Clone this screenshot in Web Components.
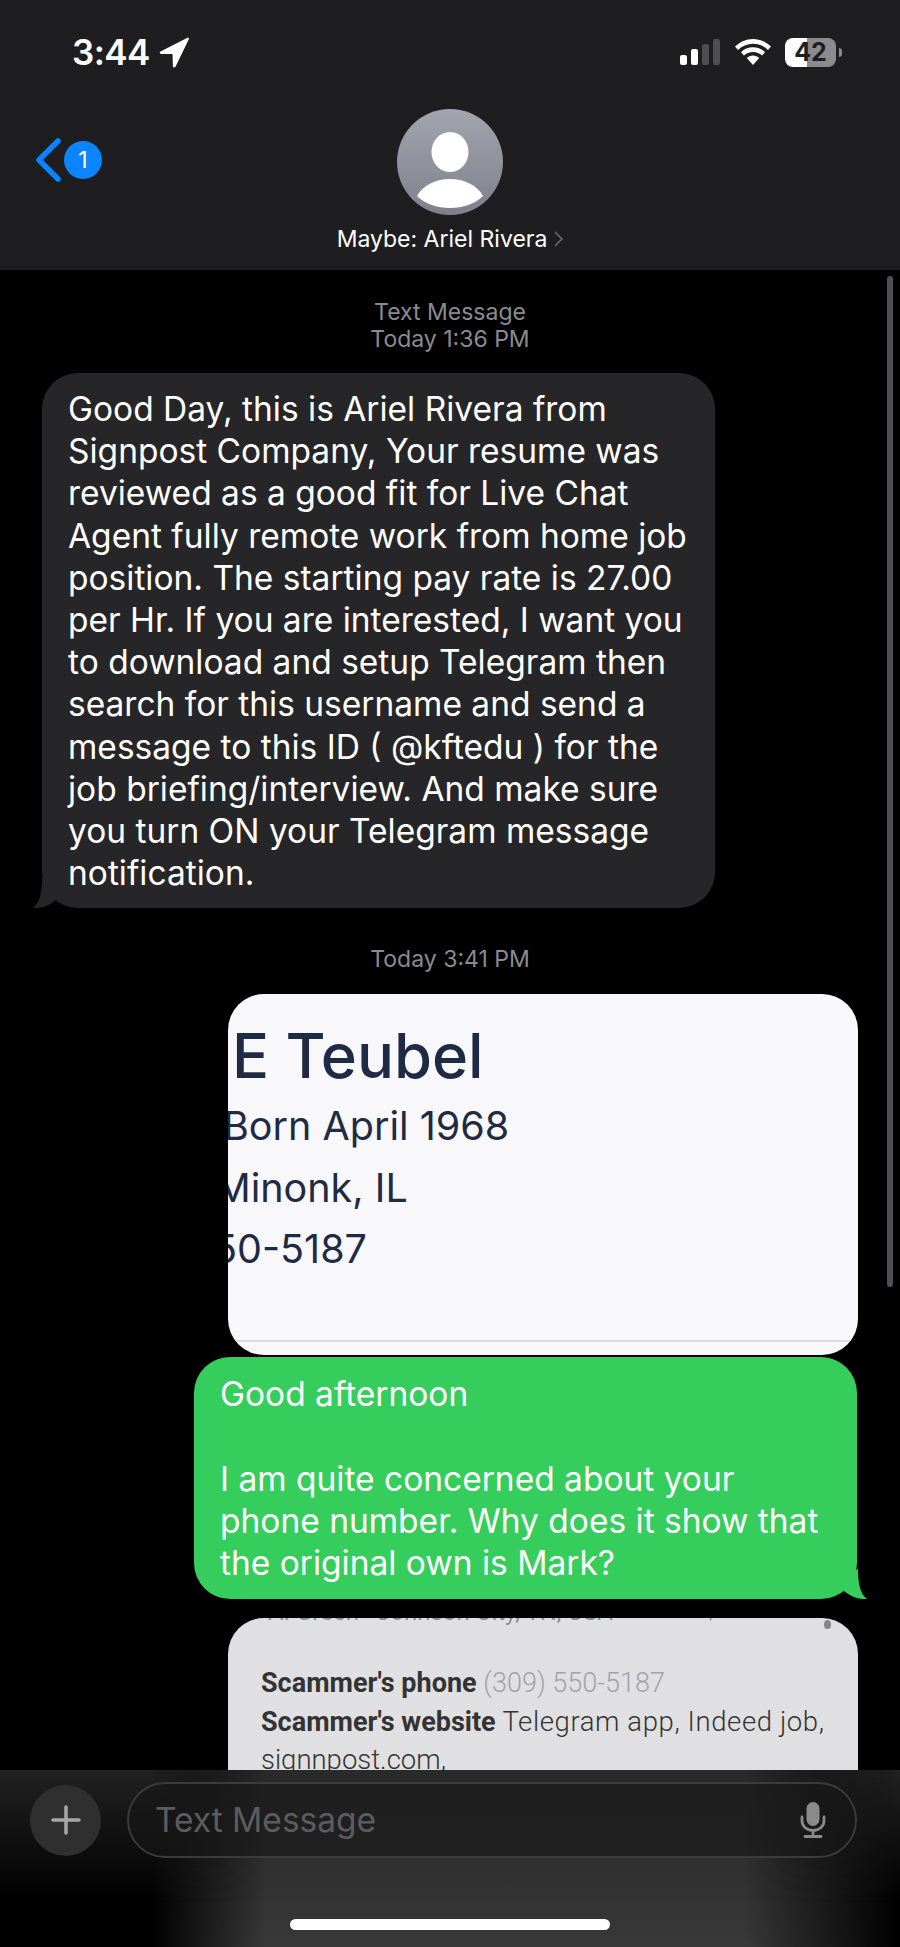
<!DOCTYPE html>
<html lang="en">
<head>
<meta charset="utf-8">
<title>Messages</title>
<style>
  html, body { margin: 0; background: #000; }
  body { font-family: Inter, "Liberation Sans", sans-serif; }
</style>
</head>
<body>
<sms-screen>
  <sms-header slot="top" name="Maybe: Ariel Rivera" time="3:44" battery="42" unread="1"></sms-header>

  <sms-stamp>Text Message<br>Today 1:36 PM</sms-stamp>
  <sms-bubble kind="in" style="margin-top:20px">Good Day, this is Ariel Rivera from<br>Signpost Company, Your resume was<br>reviewed as a good fit for Live Chat<br>Agent fully remote work from home job<br>position. The starting pay rate is 27.00<br>per Hr. If you are interested, I want you<br>to download and setup Telegram then<br>search for this username and send a<br>message to this ID ( @kftedu ) for the<br>job briefing/interview. And make sure<br>you turn ON your Telegram message<br>notification.</sms-bubble>

  <sms-stamp style="margin-top:38px">Today 3:41 PM</sms-stamp>
  <profile-shot style="margin-top:21px"></profile-shot>

  <sms-bubble kind="out" style="margin-top:2px">Good afternoon<br><br>I am quite concerned about your<br>phone number. Why does it show that<br>the original own is Mark?</sms-bubble>

  <report-shot style="margin-top:19px"></report-shot>

  <sms-composer slot="bottom"></sms-composer>
</sms-screen>

<script>
  class SmsScreen extends HTMLElement {
    constructor() {
      super();
      const shadowRoot = this.attachShadow({ mode: "open" });
      shadowRoot.innerHTML = `
        <style>
          :host {
            display: flex;
            flex-direction: column;
            position: relative;
            width: 900px;
            height: 1947px;
            overflow: hidden;
            background: #000;
          }
          main {
            flex: 1;
            min-height: 0;
            overflow: hidden;
            padding-top: 29px;
          }
          .scrollbar {
            position: absolute;
            left: 887px;
            top: 276px;
            width: 6px;
            height: 1011px;
            border-radius: 3px;
            background: #4f4f52;
          }
        </style>
        <slot name="top"></slot>
        <main><slot></slot></main>
        <slot name="bottom"></slot>
        <div class="scrollbar"></div>
      `;
    }
  }

  class SmsHeader extends HTMLElement {
    constructor() {
      super();
      const shadowRoot = this.attachShadow({ mode: "open" });
      shadowRoot.innerHTML = `
        <style>
          :host {
            display: block;
            height: 270px;
            background: #1e1e20;
            color: #fff;
            font-family: Inter, "Liberation Sans", sans-serif;
          }
          .status {
            display: flex;
            align-items: center;
            height: 104px;
            padding: 0 64px 0 72px;
          }
          .time {
            font-size: 35px;
            font-weight: 600;
            letter-spacing: -0.6px;
          }
          .arrow { margin-left: 9px; }
          .right {
            display: flex;
            align-items: center;
            margin-left: auto;
          }
          .battery {
            position: relative;
            width: 51px;
            height: 29px;
            margin-left: 14px;
            border-radius: 8px;
            background: linear-gradient(90deg, #fff 43%, #8b8b8d 43%);
            color: #1e1e20;
            font-size: 25px;
            font-weight: 700;
            line-height: 29px;
            text-align: center;
          }
          .battery::after {
            content: "";
            position: absolute;
            right: -6px;
            top: 10px;
            width: 3px;
            height: 9px;
            border-radius: 0 3px 3px 0;
            background: #8b8b8d;
          }
          .nav {
            display: grid;
            grid-template-columns: 1fr auto 1fr;
            padding-top: 5px;
          }
          .back {
            display: flex;
            align-items: center;
            gap: 3px;
            align-self: start;
            margin: 29px 0 0 36px;
          }
          .badge {
            width: 38px;
            height: 38px;
            border-radius: 50%;
            background: #0a84ff;
            font-size: 23px;
            line-height: 38px;
            text-align: center;
          }
          .who {
            display: flex;
            flex-direction: column;
            align-items: center;
          }
          .name {
            display: flex;
            align-items: center;
            gap: 7px;
            margin-top: 11px;
            font-size: 23px;
            line-height: 26px;
          }
        </style>
        <div class="status">
          <span class="time"></span>
          <svg class="arrow" width="30" height="31" viewBox="0 0 30 31"><path d="M28.500 .8 1.500 14.400c-1.300.7-.8 2.500.6 2.500l11.400.1.400 12.300c0 1.500 2 1.800 2.600.5L29.800 2.200c.4-.9-.4-1.800-1.300-1.400z" fill="#fff"/></svg>
          <div class="right">
            <svg width="41" height="26" viewBox="0 0 41 26">
              <rect x="0" y="16" width="7" height="10" rx="2" fill="#fff"/>
              <rect x="11" y="10" width="7" height="16" rx="2" fill="#fff"/>
              <rect x="22" y="5" width="7" height="21" rx="2" fill="#4e4e50"/>
              <rect x="33" y="0" width="7" height="26" rx="2" fill="#4e4e50"/>
            </svg>
            <svg style="margin-left:14px" width="36" height="26" viewBox="0 0 36 26">
              <path d="M18 0C11 0 5 2.800 0 7.600l3 3.300C7 7 12.200 4.700 18 4.700s11 2.300 15 6.200l3-3.300C31 2.800 25 0 18 0z" fill="#fff"/>
              <path d="M18 8.300c-4.700 0-8.900 1.900-12 4.900l3 3.300c2.300-2.200 5.500-3.600 9-3.600s6.700 1.400 9 3.600l3-3.300c-3.100-3-7.300-4.900-12-4.900z" fill="#fff"/>
              <path d="M18 16.500c-2.500 0-4.700 1-6.200 2.500L18 26l6.200-7c-1.500-1.500-3.700-2.500-6.200-2.500z" fill="#fff"/>
            </svg>
            <span class="battery"></span>
          </div>
        </div>
        <div class="nav">
          <div class="back">
            <svg width="25" height="44" viewBox="0 0 25 44"><path d="M22 3 3 22l19 19" fill="none" stroke="#0a84ff" stroke-width="5.500" stroke-linecap="round" stroke-linejoin="round"/></svg>
            <span class="badge"></span>
          </div>
          <div class="who">
            <svg width="106" height="106" viewBox="0 0 106 106">
              <defs>
                <linearGradient id="av" x1="0" y1="0" x2="0" y2="1">
                  <stop offset="0" stop-color="#a2a5ae"/>
                  <stop offset="1" stop-color="#7e818b"/>
                </linearGradient>
              </defs>
              <circle cx="53" cy="53" r="53" fill="url(#av)"/>
              <ellipse cx="53" cy="43" rx="18.500" ry="20" fill="#fff"/>
              <path d="M20 87c6-11 19-17 33-17s27 6 33 17c-8 8-20 12-33 12s-25-4-33-12z" fill="#fff"/>
            </svg>
            <div class="name">
              <span class="label"></span>
              <svg width="9" height="16" viewBox="0 0 9 16"><path d="m1 1 7 7-7 7" fill="none" stroke="#6d6d71" stroke-width="1.500"/></svg>
            </div>
          </div>
        </div>
      `;
    }

    connectedCallback() {
      this.shadowRoot.querySelector(".time").textContent = this.getAttribute("time");
      this.shadowRoot.querySelector(".battery").textContent = this.getAttribute("battery");
      this.shadowRoot.querySelector(".badge").textContent = this.getAttribute("unread");
      this.shadowRoot.querySelector(".label").textContent = this.getAttribute("name");
    }
  }

  class SmsStamp extends HTMLElement {
    constructor() {
      super();
      const shadowRoot = this.attachShadow({ mode: "open" });
      shadowRoot.innerHTML = `
        <style>
          :host {
            display: block;
            color: #8b8b8f;
            font-family: Inter, "Liberation Sans", sans-serif;
            font-size: 23px;
            line-height: 27px;
            text-align: center;
          }
        </style>
        <slot></slot>
      `;
    }
  }

  class SmsBubble extends HTMLElement {
    constructor() {
      super();
      const shadowRoot = this.attachShadow({ mode: "open" });
      shadowRoot.innerHTML = `
        <style>
          :host {
            display: block;
            position: relative;
            box-sizing: border-box;
            border-radius: 36px;
            color: #fff;
            font-family: Inter, "Liberation Sans", sans-serif;
            font-size: 33.500px;
            line-height: 42.200px;
            white-space: nowrap;
          }
          :host([kind="in"]) {
            width: 673px;
            margin-left: 42px;
            padding: 15px 20px 14px 26px;
            background: #262628;
          }
          :host([kind="out"]) {
            width: 663px;
            margin-left: 194px;
            padding: 16px 20px 15px 26px;
            background: #35ce5d;
          }
          svg {
            position: absolute;
            bottom: 0;
          }
          :host([kind="in"]) svg { left: -10px; fill: #262628; }
          :host([kind="out"]) svg { right: -11px; fill: #35ce5d; transform: scaleX(-1); }
        </style>
        <slot></slot>
        <svg width="40" height="30" viewBox="0 0 40 30"><path d="M10 0c0 14-2 25-9 30 8 1 17-3 23-8V8z"/></svg>
      `;
    }
  }

  class ProfileShot extends HTMLElement {
    constructor() {
      super();
      const shadowRoot = this.attachShadow({ mode: "open" });
      shadowRoot.innerHTML = `
        <style>
          :host {
            display: block;
            box-sizing: border-box;
            width: 630px;
            height: 361px;
            margin-left: 228px;
            padding-top: 25px;
            overflow: hidden;
            border-radius: 36px;
            background: #f8f8fb;
            color: #1f2a44;
            font-family: Inter, "Liberation Sans", sans-serif;
            position: relative;
          }
          h1 {
            margin: 0 0 0 4px;
            font-size: 61.500px;
            font-weight: 500;
            line-height: 74px;
          }
          p {
            margin: 0;
            font-size: 39.500px;
            line-height: 61.500px;
            white-space: nowrap;
          }
          .first { margin: 3px 0 0 -5px; }
          .second { margin-left: -13px; }
          .third { margin-left: -15px; }
          hr {
            position: absolute;
            left: 0;
            right: 0;
            bottom: 13px;
            margin: 0;
            border: 0;
            height: 2px;
            background: #dcdce0;
          }
        </style>
        <h1>E Teubel</h1>
        <p class="first">Born April 1968</p>
        <p class="second">Minonk, IL</p>
        <p class="third">50-5187</p>
        <hr>
      `;
    }
  }

  class ReportShot extends HTMLElement {
    constructor() {
      super();
      const shadowRoot = this.attachShadow({ mode: "open" });
      shadowRoot.innerHTML = `
        <style>
          :host {
            display: block;
            position: relative;
            box-sizing: border-box;
            width: 630px;
            height: 240px;
            margin-left: 228px;
            overflow: hidden;
            border-radius: 36px 36px 0 0;
            background: #e0e0e2;
            color: #333;
            font-family: Roboto, "Liberation Sans", sans-serif;
          }
          .cut {
            display: flex;
            gap: 40px;
            margin: -16px 0 0 40px;
            color: #8d8d90;
            font-size: 24px;
            line-height: 20px;
            white-space: nowrap;
          }
          .cut small { font-size: 18px; }
          .dot {
            position: absolute;
            right: 27px;
            top: 2px;
            width: 7px;
            height: 9px;
            border-radius: 50%;
            background: #85858a;
          }
          .body {
            margin: 42px 0 0 33px;
            font-size: 27.500px;
            font-weight: 300;
            line-height: 37.500px;
            white-space: nowrap;
          }
          b { font-size: 27px; font-weight: 700; }
          .phone { color: #a3a3a6; font-size: 27px; }
          .sites { letter-spacing: 0.6px; }
        </style>
        <div class="cut"><span>A. Green · Johnson City, TN, USA</span><small>Mar 29, 2021</small></div>
        <span class="dot"></span>
        <div class="body">
          <b>Scammer's phone</b> <span class="phone">(309) 550-5187</span><br>
          <b>Scammer's website</b> <span class="sites">Telegram app, Indeed job,</span><br>
          signnpost.com,
        </div>
      `;
    }
  }

  class SmsComposer extends HTMLElement {
    constructor() {
      super();
      const shadowRoot = this.attachShadow({ mode: "open" });
      shadowRoot.innerHTML = `
        <style>
          :host {
            display: block;
            position: relative;
            height: 177px;
            background:
              linear-gradient(90deg, #000 0, #000 150px, rgba(0,0,0,0) 265px, rgba(0,0,0,0) 745px, #000 900px),
              linear-gradient(180deg, #2a2a2a 0, #2e2e2e 45%, #383838 100%);
            font-family: Inter, "Liberation Sans", sans-serif;
          }
          :host::before {
            content: "";
            position: absolute;
            inset: 0;
            background: linear-gradient(90deg, #212122 0, #212122 150px, rgba(33,33,34,0) 265px, rgba(33,33,34,0) 745px, #212122 900px);
            -webkit-mask-image: linear-gradient(180deg, #000 0, transparent 75%);
            mask-image: linear-gradient(180deg, #000 0, transparent 75%);
          }
          .row {
            display: flex;
            align-items: center;
            position: relative;
            gap: 26px;
            padding: 12px 43px 0 30px;
          }
          .plus {
            display: grid;
            place-items: center;
            flex: none;
            width: 71px;
            height: 71px;
            border-radius: 50%;
            background: #2f2f2f;
          }
          .field {
            display: flex;
            align-items: center;
            flex: 1;
            box-sizing: border-box;
            height: 76px;
            padding: 0 29px 0 26px;
            border: 2px solid #3b3b3c;
            border-radius: 38px;
            background: rgba(24,24,24,0.6);
            color: #5c5c5e;
            font-size: 33.500px;
          }
          .field svg { margin-left: auto; }
          .home {
            position: absolute;
            left: 290px;
            top: 149px;
            width: 320px;
            height: 11px;
            border-radius: 6px;
            background: #fff;
          }
        </style>
        <div class="row">
          <span class="plus">
            <svg width="30" height="30" viewBox="0 0 30 30"><path d="M15 2v26M2 15h26" stroke="#a9a9a9" stroke-width="3.500" stroke-linecap="round"/></svg>
          </span>
          <div class="field">
            <span>Text Message</span>
            <svg width="26" height="36" viewBox="0 0 26 36">
              <rect x="6.500" y="0" width="13" height="24" rx="6.500" fill="#8a8a8a"/>
              <path d="M2 15v4a11 9.500 0 0 0 22 0v-4M13 29v5M5 34.500h16" fill="none" stroke="#8a8a8a" stroke-width="2.800" stroke-linecap="round"/>
            </svg>
          </div>
        </div>
        <div class="home"></div>
      `;
    }
  }

  customElements.define("sms-screen", SmsScreen);
  customElements.define("sms-header", SmsHeader);
  customElements.define("sms-stamp", SmsStamp);
  customElements.define("sms-bubble", SmsBubble);
  customElements.define("profile-shot", ProfileShot);
  customElements.define("report-shot", ReportShot);
  customElements.define("sms-composer", SmsComposer);
</script>
</body>
</html>
